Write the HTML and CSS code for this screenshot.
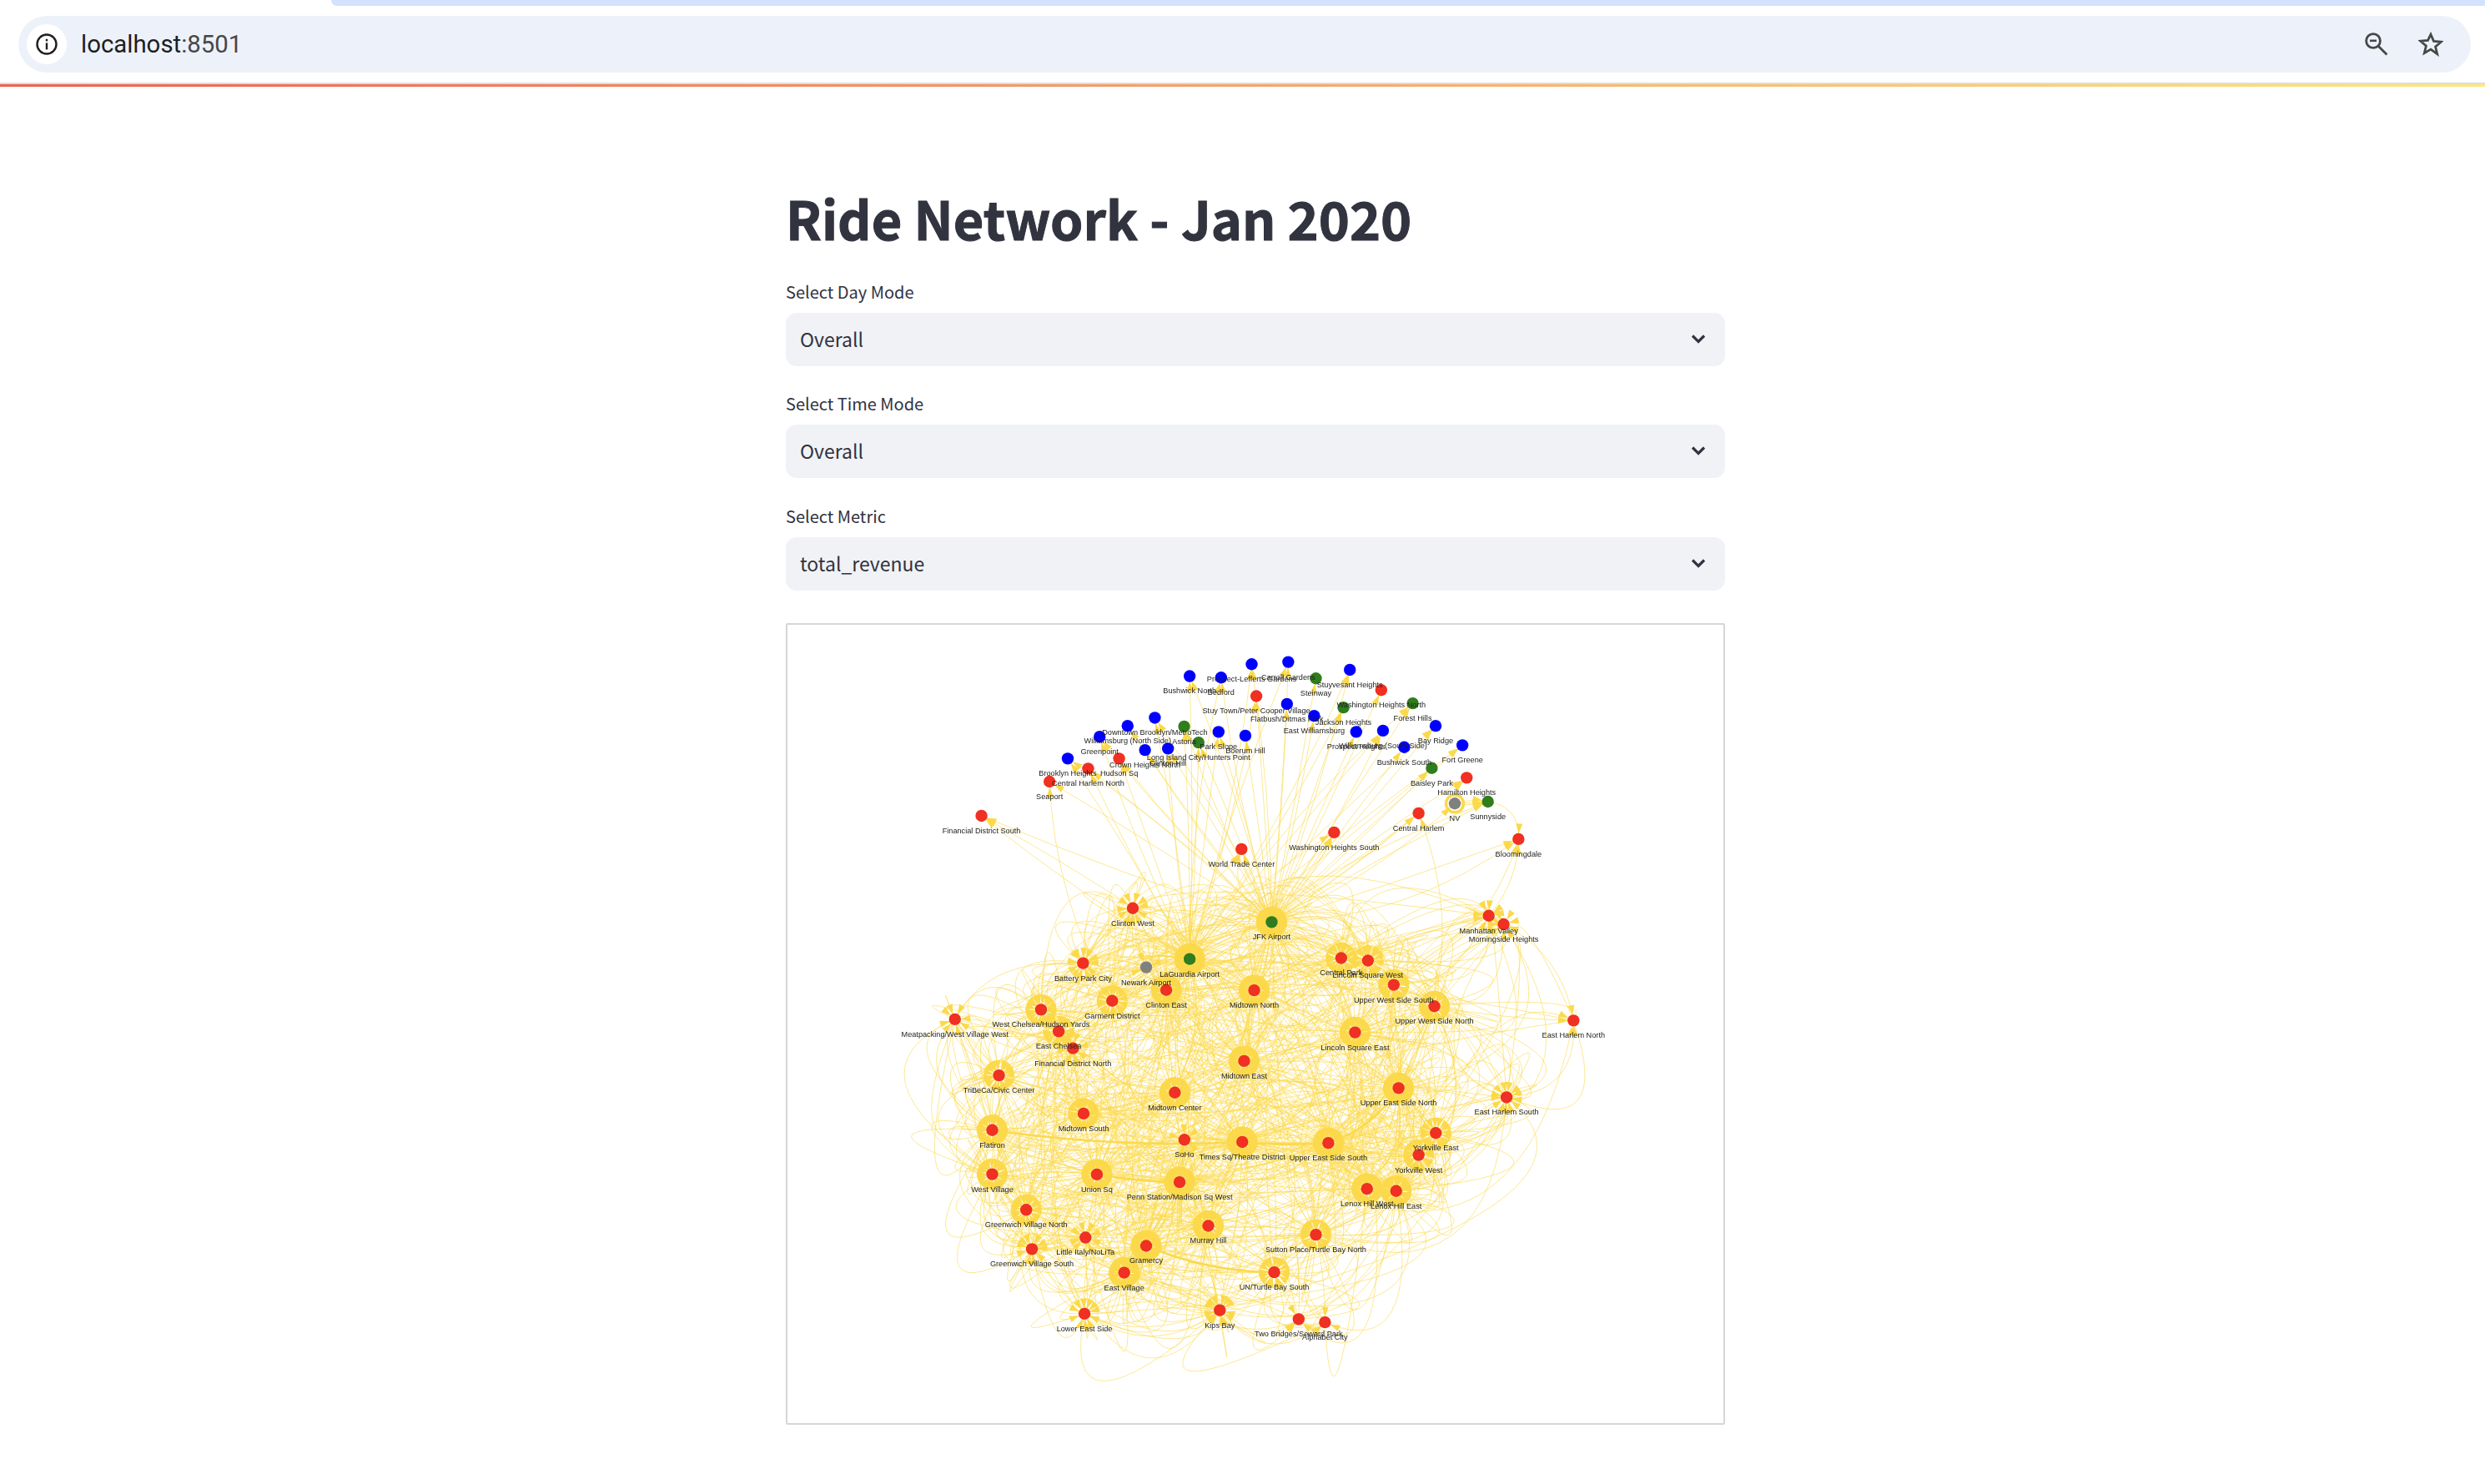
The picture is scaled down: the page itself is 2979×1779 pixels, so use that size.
FILE: index.html
```html
<!DOCTYPE html>
<html lang="en">
<head>
<meta charset="utf-8">
<title>Ride Network - Jan 2020</title>
<link rel="stylesheet" href="styles.css">
</head>
<body>
<div class="tab-strip"></div>
<header class="address-bar">
  <span class="info-chip">
    <svg class="info-icon" viewBox="0 0 26 26" width="26" height="26"><circle cx="13" cy="13" r="11.5" fill="none" stroke="#1f1f1f" stroke-width="2.4"/><rect x="11.8" y="11.4" width="2.4" height="8" fill="#1f1f1f"/><rect x="11.8" y="6.8" width="2.4" height="2.6" fill="#1f1f1f"/></svg>
  </span>
  <span class="url"><span class="host">localhost</span><span class="port">:8501</span></span>
  <span class="bar-actions">
    <svg viewBox="0 0 28 28" width="28" height="28"><circle cx="10" cy="10" r="8.4" fill="none" stroke="#474747" stroke-width="2.8"/><path d="M6 9.8h8" stroke="#474747" stroke-width="2.6"/><path d="M16.4 16.4L26.4 26.4" stroke="#474747" stroke-width="2.8"/></svg>
    <svg viewBox="0 0 30 30" width="30" height="30"><path d="M15 3.2l3.5 8.2 8.9.8-6.8 5.8 2.1 8.7L15 21.1l-7.7 4.6 2.1-8.7-6.8-5.8 8.9-.8z" fill="none" stroke="#474747" stroke-width="2.8" stroke-linejoin="miter"/></svg>
  </span>
</header>
<div class="bar-divider"></div>
<div class="decoration"></div>
<main class="main">
  <h1 class="title">Ride Network - Jan 2020</h1>
  <section class="field">
    <label class="field-label">Select Day Mode</label>
    <div class="select"><span>Overall</span><svg class="chevron" viewBox="0 0 18 12" width="18" height="12"><path d="M2 2.5l7 7 7-7" fill="none" stroke="#31333f" stroke-width="3.2"/></svg></div>
  </section>
  <section class="field">
    <label class="field-label">Select Time Mode</label>
    <div class="select"><span>Overall</span><svg class="chevron" viewBox="0 0 18 12" width="18" height="12"><path d="M2 2.5l7 7 7-7" fill="none" stroke="#31333f" stroke-width="3.2"/></svg></div>
  </section>
  <section class="field">
    <label class="field-label">Select Metric</label>
    <div class="select"><span>total_revenue</span><svg class="chevron" viewBox="0 0 18 12" width="18" height="12"><path d="M2 2.5l7 7 7-7" fill="none" stroke="#31333f" stroke-width="3.2"/></svg></div>
  </section>
  <div class="graph-frame">
    <svg id="graph" class="graph" viewBox="943 749 1124 958" xmlns="http://www.w3.org/2000/svg"></svg>
  </div>
</main>
<script src="graph.js"></script>
</body>
</html>
```
FILE: styles.css
```css
* { box-sizing: border-box; }
html, body { margin: 0; padding: 0; background: #fff; }
body { height: 1779px; overflow: hidden; font-family: "Noto Sans CJK SC", "Noto Sans", sans-serif; color: #31333f; }

.tab-strip { height: 7px; margin-left: 397px; background: #d3e3fd; border-bottom-left-radius: 14px; }
.address-bar { display: flex; align-items: center; height: 68px; margin: 12px 17px 0 22px; padding: 0 33px 0 10px; background: #edf2fa; border-radius: 34px; }
.info-chip { display: flex; align-items: center; justify-content: center; width: 48px; height: 48px; border-radius: 50%; background: #fff; }
.url { margin-left: 17px; font-family: Roboto, "Liberation Sans", sans-serif; font-size: 29.4px; line-height: 34px; }
.host { color: #1f1f1f; }
.port { color: #474747; }
.bar-actions { display: flex; align-items: center; gap: 36px; margin-left: auto; }
.bar-divider { height: 2px; margin-top: 12px; background: #dcdcdc; }
.decoration { height: 3px; background: linear-gradient(90deg, #f0604f, #fde880); }

.main { width: 1126px; margin-left: 942px; }
.title { margin: 0; padding-top: 112px; font-size: 63px; font-weight: 700; line-height: 90px; color: #31333f; white-space: nowrap; -webkit-text-stroke: 1px #31333f; }
.field { margin-bottom: 34.4px; }
.title + .field { margin-top: 33px; }
.field-label { display: block; height: 36px; font-size: 20px; line-height: 22px; color: #31333f; }
.select { display: flex; align-items: center; justify-content: space-between; height: 64px; padding: 0 23px 2px 17px; background: #f0f2f6; border-radius: 13px; font-size: 23px; color: #31333f; }
.graph-frame { width: 1126px; height: 961px; margin-top: 39px; border: 2px solid #d6d6d6; border-radius: 2px; background: #fff; }
.graph { display: block; width: 100%; height: 100%; filter: blur(0.35px); }
.edge { fill: none; stroke: #fbd94e; stroke-opacity: .72; stroke-width: .85; }
.edge-thick { fill: none; stroke: #fbd94e; stroke-width: 2.6; }
.arrow { fill: #fbd94a; }
.node-red { fill: #ef3022; }
.node-blue { fill: #0000ff; }
.node-green { fill: #2f7d1d; }
.node-gray { fill: #808080; }
.node-label { font-family: "Liberation Sans", Arial, sans-serif; font-size: 9.2px; fill: #222; text-anchor: middle; }
```
FILE: graph.js
```js
(function () {
  var NS = 'http://www.w3.org/2000/svg';
  var svg = document.getElementById('graph');
  function z4(x, y) { return [1100 + x / 1.96, 770 + y / 3]; }
  function z5(x, y) { return [1050 + x / 1.742, 1080 + y / 2.613]; }

  // name, colour, position
  var outer = [
    ['Bushwick North','blue',z4(639,121)],['Bedford','blue',z4(713,126)],
    ['Prospect-Lefferts Gardens','blue',z4(785,78)],['Carroll Gardens','blue',z4(871,70)],
    ['Steinway','green',z4(936,129)],['Stuyvesant Heights','blue',z4(1016,98)],
    ['Washington Heights North','red',z4(1090,171)],['Stuy Town/Peter Cooper Village','red',z4(796,193)],
    ['Flatbush/Ditmas Park','blue',z4(868,221)],['Jackson Heights','green',z4(1001,234)],
    ['East Williamsburg','blue',z4(932,264)],['Forest Hills','green',z4(1164,219)],
    ['Bay Ridge','blue',z4(1218,300)],['Fort Greene','blue',z4(1281,370)],
    ['Williamsburg (South Side)','blue',z4(1094,317)],['Prospect Heights','blue',z4(1031,322)],
    ['Bushwick South','blue',z4(1144,377)],['Baisley Park','green',z4(1209,452)],
    ['Hamilton Heights','red',z4(1291,487)],['Sunnyside','green',z4(1341,573)],
    ['Central Harlem','red',z4(1178,615)],['Bloomingdale','red',z4(1413,708)],
    ['Washington Heights South','red',z4(979,684)],['World Trade Center','red',z4(761,744)],
    ['Financial District South','red',z4(149,624)],['Seaport','red',z4(309,501)],
    ['Central Harlem North','red',z4(400,454)],['Brooklyn Heights','blue',z4(352,418)],
    ['Hudson Sq','red',z4(473,418)],['Crown Heights North','blue',z4(534,387)],
    ['Clinton Hill','blue',z4(588,382)],['Long Island City/Hunters Point','green',z4(660,360)],
    ['Greenpoint','blue',z4(427,339)],['Williamsburg (North Side)','blue',z4(493,300)],
    ['Downtown Brooklyn/MetroTech','blue',z4(557,271)],['Astoria','green',z4(626,302)],
    ['Park Slope','blue',z4(707,322)],['Boerum Hill','blue',z4(770,335)]
  ];
  // name, colour, position, weight (incoming edges)
  var core = [
    ['JFK Airport','green',z4(832,1007),44],['LaGuardia Airport','green',z5(655,183),42],
    ['Clinton West','red',z4(505,957),11],['Manhattan Valley','red',z4(1343,984),9],
    ['Morningside Heights','red',z4(1378,1015),9],['Battery Park City','red',z5(432,196),12],
    ['Newark Airport','gray',z5(564,209),3],['Clinton East','red',z5(606,280),26],
    ['Midtown North','red',z5(790,281),28],['Central Park','red',z5(972,180),17],
    ['Lincoln Square West','red',z5(1028,188),15],['Upper West Side South','red',z5(1082,264),22],
    ['Upper West Side North','red',z5(1167,331),24],['East Harlem North','red',z5(1458,376),2],
    ['West Chelsea/Hudson Yards','red',z5(344,342),20],['Garment District','red',z5(493,314),17],
    ['Meatpacking/West Village West','red',z5(164,372),8],['East Chelsea','red',z5(381,410),16],
    ['Financial District North','red',z5(411,463),8],['TriBeCa/Civic Center','red',z5(256,548),19],
    ['Lincoln Square East','red',z5(1001,413),27],['Midtown East','red',z5(769,503),27],
    ['Upper East Side North','red',z5(1092,588),32],['Midtown Center','red',z5(624,602),28],
    ['Midtown South','red',z5(433,668),24],['East Harlem South','red',z5(1318,617),13],
    ['Flatiron','red',z5(242,720),25],['SoHo','red',z5(644,750),5],
    ['Times Sq/Theatre District','red',z5(765,757),38],['Upper East Side South','red',z5(945,760),34],
    ['Yorkville East','red',z5(1170,729),16],['Yorkville West','red',z5(1134,798),17],
    ['West Village','red',z5(242,858),22],['Union Sq','red',z5(461,859),30],
    ['Penn Station/Madison Sq West','red',z5(634,883),34],['Lenox Hill West','red',z5(1026,904),30],
    ['Lenox Hill East','red',z5(1087,911),24],['Greenwich Village North','red',z5(313,970),22],
    ['Murray Hill','red',z5(694,1020),28],['Sutton Place/Turtle Bay North','red',z5(919,1048),19],
    ['Little Italy/NoLiTa','red',z5(437,1057),8],['Greenwich Village South','red',z5(325,1093),10],
    ['Gramercy','red',z5(564,1083),32],['East Village','red',z5(518,1167),30],
    ['UN/Turtle Bay South','red',z5(832,1166),17],['Lower East Side','red',z5(435,1296),10],
    ['Kips Bay','red',z5(718,1285),13],['Two Bridges/Seward Park','red',z5(883,1313),2],
    ['Alphabet City','red',z5(938,1323),2]
  ];
  var nv = ['NV','gray',z4(1263,580)];
  var seed = 20200131;
  function rnd() { seed = (seed * 1664525 + 1013904223) >>> 0; return seed / 4294967296; }
  function el(tag, attrs, parent) {
    var e = document.createElementNS(NS, tag);
    for (var k in attrs) e.setAttribute(k, attrs[k]);
    parent.appendChild(e);
    return e;
  }
  var edgesG = el('g', {}, svg), arrowsG = el('g', {}, svg), nodesG = el('g', {}, svg), labelsG = el('g', {}, svg);
  var edgeD = [], arrowD = [];

  function draw(a, b, cx, cy, cls, noArrow) {
    var d = 'M' + a[0].toFixed(1) + ' ' + a[1].toFixed(1) + 'Q' + cx.toFixed(1) + ' ' + cy.toFixed(1) + ' ' + b[0].toFixed(1) + ' ' + b[1].toFixed(1);
    if (cls) el('path', { d: d, 'class': cls }, edgesG); else edgeD.push(d);
    if (noArrow) return;
    var ux = b[0] - cx, uy = b[1] - cy, l = Math.sqrt(ux * ux + uy * uy) || 1;
    ux /= l; uy /= l;
    var tx = b[0] - ux * 6.6, ty = b[1] - uy * 6.6;
    var bx = tx - ux * 11.8, by = ty - uy * 11.8;
    arrowD.push('M' + tx.toFixed(1) + ' ' + ty.toFixed(1) + 'L' + (bx - uy * 4).toFixed(1) + ' ' + (by + ux * 4).toFixed(1) + 'L' + (bx + uy * 4).toFixed(1) + ' ' + (by - ux * 4).toFixed(1) + 'Z');
  }
  function edge(a, b, curv, cls) {
    var dx = b[0] - a[0], dy = b[1] - a[1];
    draw(a, b, (a[0] + b[0]) / 2 - dy * curv, (a[1] + b[1]) / 2 + dx * curv, cls);
  }
  // edge that arrives at b from a chosen angle; the control point stays in the cloud's envelope
  function arrive(a, b, ang, reach, noArrow) {
    var ux = Math.cos(ang), uy = Math.sin(ang), t = reach;
    for (var i = 0; i < 40; i++) {
      var ex = (b[0] + ux * t - 1470) / 500, ey = (b[1] + uy * t - 1375) / 415;
      if (ex * ex + ey * ey <= 1) break;
      t *= .85;
    }
    draw(a, b, b[0] + ux * t, b[1] + uy * t, null, noArrow);
  }

  function pos(name) {
    var all = core.concat(outer);
    for (var i = 0; i < all.length; i++) if (all[i][0] === name) return all[i][2];
    return nv[2];
  }

  // fan from the airports up to the outer arc
  var jfk = pos('JFK Airport'), lga = pos('LaGuardia Airport'), tsq = pos('Times Sq/Theatre District');
  outer.forEach(function (n) {
    edge(jfk, n[2], (rnd() - .5) * .1);
    if (rnd() < .55) edge(lga, n[2], (rnd() - .5) * .14);
  });
  // the named long arcs
  edge(pos('Midtown North'), pos('Financial District South'), .03);
  edge(pos('Garment District'), pos('Seaport'), -.12);
  edge(pos('Clinton West'), pos('World Trade Center'), .28);
  edge(jfk, pos('World Trade Center'), -.42);
  edge(jfk, pos('Bloomingdale'), .16);
  edge(pos('Upper West Side South'), pos('Bloomingdale'), .22);
  edge(pos('Manhattan Valley'), pos('Bloomingdale'), .18);
  edge(pos('Sunnyside'), pos('Bloomingdale'), -.45);
  edge(pos('Upper West Side North'), pos('East Harlem North'), .04);
  edge(pos('Morningside Heights'), pos('East Harlem North'), -.25);
  edge(pos('East Harlem South'), pos('East Harlem North'), .5);
  edge(jfk, nv[2], .08);
  edge(jfk, pos('Central Harlem'), .03);
  edge(lga, pos('Central Harlem'), .05);
  edge(pos('Upper East Side North'), pos('Central Harlem'), .24);
  edge(jfk, pos('Washington Heights South'), .1);
  edge(lga, pos('Washington Heights South'), -.09);
  edge(nv[2], pos('Sunnyside'), .12);
  edge(nv[2], pos('Sunnyside'), -.12);
  edge(nv[2], pos('Sunnyside'), .02);
  edge(nv[2], pos('Hamilton Heights'), -.2);
  el('circle', { cx: nv[2][0], cy: nv[2][1], r: 10.5, fill: 'none', stroke: '#fbd94a', 'stroke-width': 3.5 }, edgesG);

  // the dense core: each node's incoming edges arrive from all around it
  var pool = [];
  core.forEach(function (n) { for (var i = 0; i < n[3]; i++) pool.push(n); });
  core.forEach(function (n) {
    var near = core.filter(function (o) { return o !== n; }).sort(function (p, q) {
      return Math.hypot(p[2][0] - n[2][0], p[2][1] - n[2][1]) - Math.hypot(q[2][0] - n[2][0], q[2][1] - n[2][1]);
    }).slice(0, 8);
    var start = rnd() * 6.283;
    for (var i = 0; i < n[3]; i++) {
      var src;
      if (rnd() < .4) src = near[Math.floor(rnd() * near.length)];
      else { do { src = pool[Math.floor(rnd() * pool.length)]; } while (src === n); }
      var dist = Math.hypot(src[2][0] - n[2][0], src[2][1] - n[2][1]);
      var ang = start + (i + (rnd() - .5) * .7) * 6.283 / n[3];
      arrive(src[2], n[2], ang, Math.max(90, dist * (.45 + rnd() * .5)));
    }
    // wider loops that bulge away from the middle of the cloud
    var outward = Math.atan2(n[2][1] - 1375, n[2][0] - 1470);
    var extra = Math.round(n[3] * .25);
    for (var j = 0; j < extra; j++) {
      var other = near[Math.floor(rnd() * near.length)];
      arrive(other[2], n[2], outward + (rnd() - .5) * 2.4, 90 + rnd() * 130, true);
    }
  });
  // the bottom-most sweeping loops
  var lesSide = pos('Lower East Side'), kips = pos('Kips Bay'), two = pos('Two Bridges/Seward Park'), alpha = pos('Alphabet City');
  edge(pos('Gramercy'), lesSide, .5);
  edge(kips, lesSide, .42);
  edge(lesSide, kips, .36);
  edge(pos('East Village'), kips, .4);
  edge(kips, two, .5);
  edge(kips, alpha, .52);
  edge(pos('UN/Turtle Bay South'), two, .04);
  edge(pos('Sutton Place/Turtle Bay North'), alpha, -.06);
  // heavy routes
  edge(pos('Flatiron'), tsq, .05, 'edge-thick');
  edge(tsq, pos('Upper East Side South'), .04, 'edge-thick');
  edge(pos('Upper East Side South'), pos('Upper East Side North'), .18, 'edge-thick');
  edge(pos('Gramercy'), pos('UN/Turtle Bay South'), .1, 'edge-thick');
  edge(pos('Union Sq'), pos('Penn Station/Madison Sq West'), .04, 'edge-thick');

  edgeD.forEach(function (d) { el('path', { d: d, 'class': 'edge' }, edgesG); });
  el('path', { d: arrowD.join(''), 'class': 'arrow' }, arrowsG);

  core.concat(outer, [nv]).forEach(function (n) {
    el('circle', { cx: n[2][0].toFixed(1), cy: n[2][1].toFixed(1), r: 7.2, 'class': 'node-' + n[1] }, nodesG);
    var t = el('text', { x: n[2][0].toFixed(1), y: (n[2][1] + 21).toFixed(1), 'class': 'node-label' }, labelsG);
    t.textContent = n[0];
  });
})();
```
